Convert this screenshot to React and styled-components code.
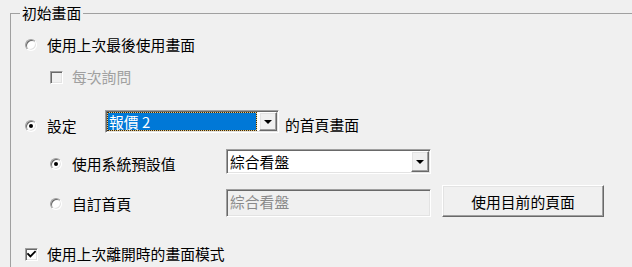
import React from 'react';
import styled, { createGlobalStyle, css } from 'styled-components';

const Global = createGlobalStyle`
  html, body { margin: 0; padding: 0; background: #f0f0f0; width: 632px; height: 267px; overflow: hidden; }
  body {
    font-family: "Noto Sans CJK TC", "Noto Sans CJK SC", sans-serif;
    font-size: 14.8px;
    color: #000;
  }
`;

const sunken = css`
  border: 1px solid;
  border-color: #a0a0a0 #fff #fff #a0a0a0;
  box-shadow: inset 1px 1px 0 #696969, inset -1px -1px 0 #e3e3e3;
`;

const raised = css`
  border: 1px solid;
  border-color: #fff #696969 #696969 #fff;
  box-shadow: inset -1px -1px 0 #a0a0a0, inset 1px 1px 0 #e3e3e3;
`;

const Group = styled.fieldset`
  margin: 3px 0 0 10px;
  padding: 0;
  border: none;
  border-top: 1px solid #a0a0a0;
  border-left: 1px solid #a0a0a0;
  height: 264px;
  box-sizing: border-box;
  min-width: 0;
`;

const Legend = styled.legend`
  margin-left: 9px;
  padding: 0 2px;
  line-height: 20px;
`;

const Content = styled.div`
  display: flex;
  flex-direction: column;
  padding-left: 14px;
`;

const Row = styled.div`
  display: flex;
  align-items: flex-start;
  height: ${p => p.$h}px;
  margin-top: ${p => p.$mt}px;
`;

const Option = styled.label`
  display: flex;
  align-items: center;
  gap: ${p => (p.$box ? 9 : 10)}px;
  height: 24px;
  line-height: 24px;
  flex-shrink: 0;
  margin-top: ${p => p.$top || 0}px;
  margin-left: ${p => p.$indent || 0}px;
  width: ${p => (p.$w ? `${p.$w}px` : 'auto')};
  color: ${p => (p.$disabled ? '#a0a0a0' : '#000')};
  white-space: nowrap;
`;

const Radio = styled.span`
  position: relative;
  width: 12px;
  height: 12px;
  box-sizing: border-box;
  border-radius: 50%;
  background: #fff;
  flex-shrink: 0;
  border: 1px solid;
  border-color: #a0a0a0 #fff #fff #a0a0a0;
  box-shadow: inset 1px 1px 0 #696969, inset -1px -1px 0 #e3e3e3;
  ${p => p.$checked && css`
    &::after {
      content: '';
      position: absolute;
      left: 3px;
      top: 3px;
      width: 4px;
      height: 4px;
      border-radius: 50%;
      background: #000;
    }
  `}
`;

const Box = styled.span`
  width: 13px;
  height: 13px;
  box-sizing: border-box;
  flex-shrink: 0;
  display: flex;
  align-items: center;
  justify-content: center;
  background: ${p => (p.$disabled ? '#f0f0f0' : '#fff')};
  ${sunken}
`;

const Text = styled.span`
  line-height: 24px;
  margin-top: ${p => p.$top || 0}px;
  margin-left: ${p => p.$ml || 0}px;
  white-space: nowrap;
`;

const Combo = styled.div`
  ${sunken}
  box-sizing: border-box;
  width: ${p => p.$w}px;
  height: ${p => p.$h}px;
  background: ${p => (p.$disabled ? '#f0f0f0' : '#fff')};
  color: ${p => (p.$disabled ? '#8a8a8a' : '#000')};
  display: flex;
  align-items: stretch;
  padding: 1px;
  gap: 2px;
  flex-shrink: 0;
  margin-top: ${p => p.$top || 0}px;
`;

const Value = styled.div`
  flex: 1;
  display: flex;
  align-items: center;
  padding-left: 2px;
  padding-bottom: ${p => p.$pb || 0}px;
  white-space: nowrap;
`;

const Highlight = styled.div`
  flex: 1;
  display: flex;
  align-items: center;
  padding-left: 1px;
  color: #fff;
  background: #e8c678;
  border: 1px dotted #3a2a10;
  box-shadow: inset 0 0 0 200px #0078d7;
  white-space: nowrap;
`;

const ArrowButton = styled.div`
  ${raised}
  width: 18px;
  box-sizing: border-box;
  background: #f0f0f0;
  display: flex;
  align-items: center;
  justify-content: center;
  flex-shrink: 0;
  &::after {
    content: '';
    width: 0;
    height: 0;
    border-left: 4px solid transparent;
    border-right: 4px solid transparent;
    border-top: 4px solid #000;
    margin-top: 1px;
  }
`;

const Button = styled.button`
  ${raised}
  width: 162px;
  height: 32px;
  margin-left: 11px;
  background: #f0f0f0;
  font: inherit;
  color: #000;
  padding: 0;
  display: flex;
  align-items: center;
  justify-content: center;
  flex-shrink: 0;
`;

const Check = () => (
  <svg width="9" height="9" viewBox="0 0 9 9">
    <path d="M1 4 L3.4 6.4 L8 1.8" fill="none" stroke="#000" strokeWidth="1.8" strokeLinecap="square" />
  </svg>
);

export default function App() {
  return (
    <>
      <Global />
      <Group>
        <Legend>初始畫面</Legend>
        <Content>
          <Row $h={24} $mt={10}>
            <Option>
              <Radio />
              使用上次最後使用畫面
            </Option>
          </Row>
          <Row $h={24} $mt={8}>
            <Option $box $indent={25} $disabled>
              <Box $disabled />
              每次詢問
            </Option>
          </Row>
          <Row $h={28} $mt={21}>
            <Option $top={4} $w={80}>
              <Radio $checked />
              設定
            </Option>
            <Combo $w={174} $h={23}>
              <Highlight>報價 2</Highlight>
              <ArrowButton />
            </Combo>
            <Text $top={3} $ml={6}>的首頁畫面</Text>
          </Row>
          <Row $h={27} $mt={11}>
            <Option $top={3} $indent={25} $w={176}>
              <Radio $checked />
              使用系統預設值
            </Option>
            <Combo $w={205} $h={25}>
              <Value>綜合看盤</Value>
              <ArrowButton />
            </Combo>
          </Row>
          <Row $h={32} $mt={9}>
            <Option $top={7} $indent={25} $w={176}>
              <Radio />
              自訂首頁
            </Option>
            <Combo $w={205} $h={28} $top={4} $disabled>
              <Value $pb={3}>綜合看盤</Value>
            </Combo>
            <Button>使用目前的頁面</Button>
          </Row>
          <Row $h={24} $mt={25}>
            <Option $box>
              <Box>
                <Check />
              </Box>
              使用上次離開時的畫面模式
            </Option>
          </Row>
        </Content>
      </Group>
    </>
  );
}
